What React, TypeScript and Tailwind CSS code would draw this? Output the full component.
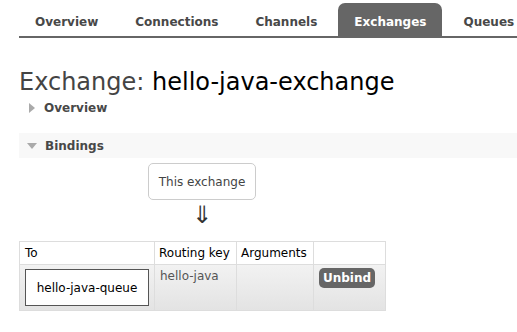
import React from 'react';

const tabs = ['Overview', 'Connections', 'Channels', 'Exchanges', 'Queues'];

const App: React.FC = () => {
  return (
    <div className="w-[517px] h-[332px] overflow-hidden bg-white text-[#484848]" style={{ fontFamily: '"DejaVu Sans", Verdana, sans-serif' }}>
      <div className="ml-[19px] mt-[4px] flex gap-[5px] border-b-2 border-[#666] h-[34px] items-end whitespace-nowrap">
        {tabs.map((t) => (
          <div
            key={t}
            className={
              t === 'Exchanges'
                ? 'h-[33px] px-[16px] pt-[4px] flex items-center rounded-t-[7px] bg-[#666] text-white text-[12px] font-bold'
                : 'h-[33px] px-[16px] pt-[4px] flex items-center text-[12px] font-bold text-[#484848]'
            }
          >
            {t}
          </div>
        ))}
      </div>

      <h1 className="ml-[19px] mt-[30px] text-[24px] leading-[28px] font-normal text-[#444]">
        Exchange: <span className="text-black">hello-java-exchange</span>
      </h1>

      <div className="ml-[29px] mt-[3px] flex items-center h-[18px] text-[12px] font-bold">
        <span className="w-0 h-0 border-y-[5px] border-y-transparent border-l-[6px] border-l-[#aaa] mr-[9px]" />
        Overview
      </div>

      <div className="ml-[19px] mt-[16px] h-[25px] bg-[#f8f8f8] flex items-center pl-[8px] text-[12px] font-bold">
        <span className="w-0 h-0 border-x-[5px] border-x-transparent border-t-[6px] border-t-[#aaa] mr-[8px] mt-[1px]" />
        Bindings
      </div>

      <div className="ml-[148px] mt-[5px] w-[108px] h-[37px] border border-[#ccc] rounded-[5px] flex items-center justify-center text-[12px] text-[#444]">
        This exchange
      </div>
      <div className="ml-[190px] w-[24px] text-center text-[24px] leading-[30px] text-[#333]">⇓</div>

      <table className="ml-[19px] mt-[11px] w-[366px] table-fixed border-collapse text-[12px] text-black">
        <colgroup>
          <col className="w-[135px]" />
          <col className="w-[82px]" />
          <col className="w-[77px]" />
          <col className="w-[72px]" />
        </colgroup>
        <thead>
          <tr className="h-[23px]">
            <th className="border border-[#ddd] font-normal text-left px-[5px] whitespace-nowrap">To</th>
            <th className="border border-[#ddd] font-normal text-left px-[4px] whitespace-nowrap">Routing key</th>
            <th className="border border-[#ddd] font-normal text-left px-[4px] whitespace-nowrap">Arguments</th>
            <th className="border border-[#ddd]"></th>
          </tr>
        </thead>
        <tbody>
          <tr className="h-[46px] bg-gradient-to-b from-[#f2f2f2] to-[#e3e3e3]">
            <td className="border border-[#ddd] px-[5px] py-[3px]">
              <div className="w-[124px] h-[37px] border border-[#555] bg-white flex items-center justify-center text-black">
                hello-java-queue
              </div>
            </td>
            <td className="border border-[#ddd] align-top px-[5px] pt-[2px] text-[#555] whitespace-nowrap">hello-java</td>
            <td className="border border-[#ddd]"></td>
            <td className="border border-[#ddd] align-top pt-[3px] px-[5px]">
              <div className="w-[56px] h-[20px] rounded-[5px] bg-[#666] text-white font-bold text-[12px] flex items-center justify-center">
                Unbind
              </div>
            </td>
          </tr>
        </tbody>
      </table>
    </div>
  );
};

export default App;
